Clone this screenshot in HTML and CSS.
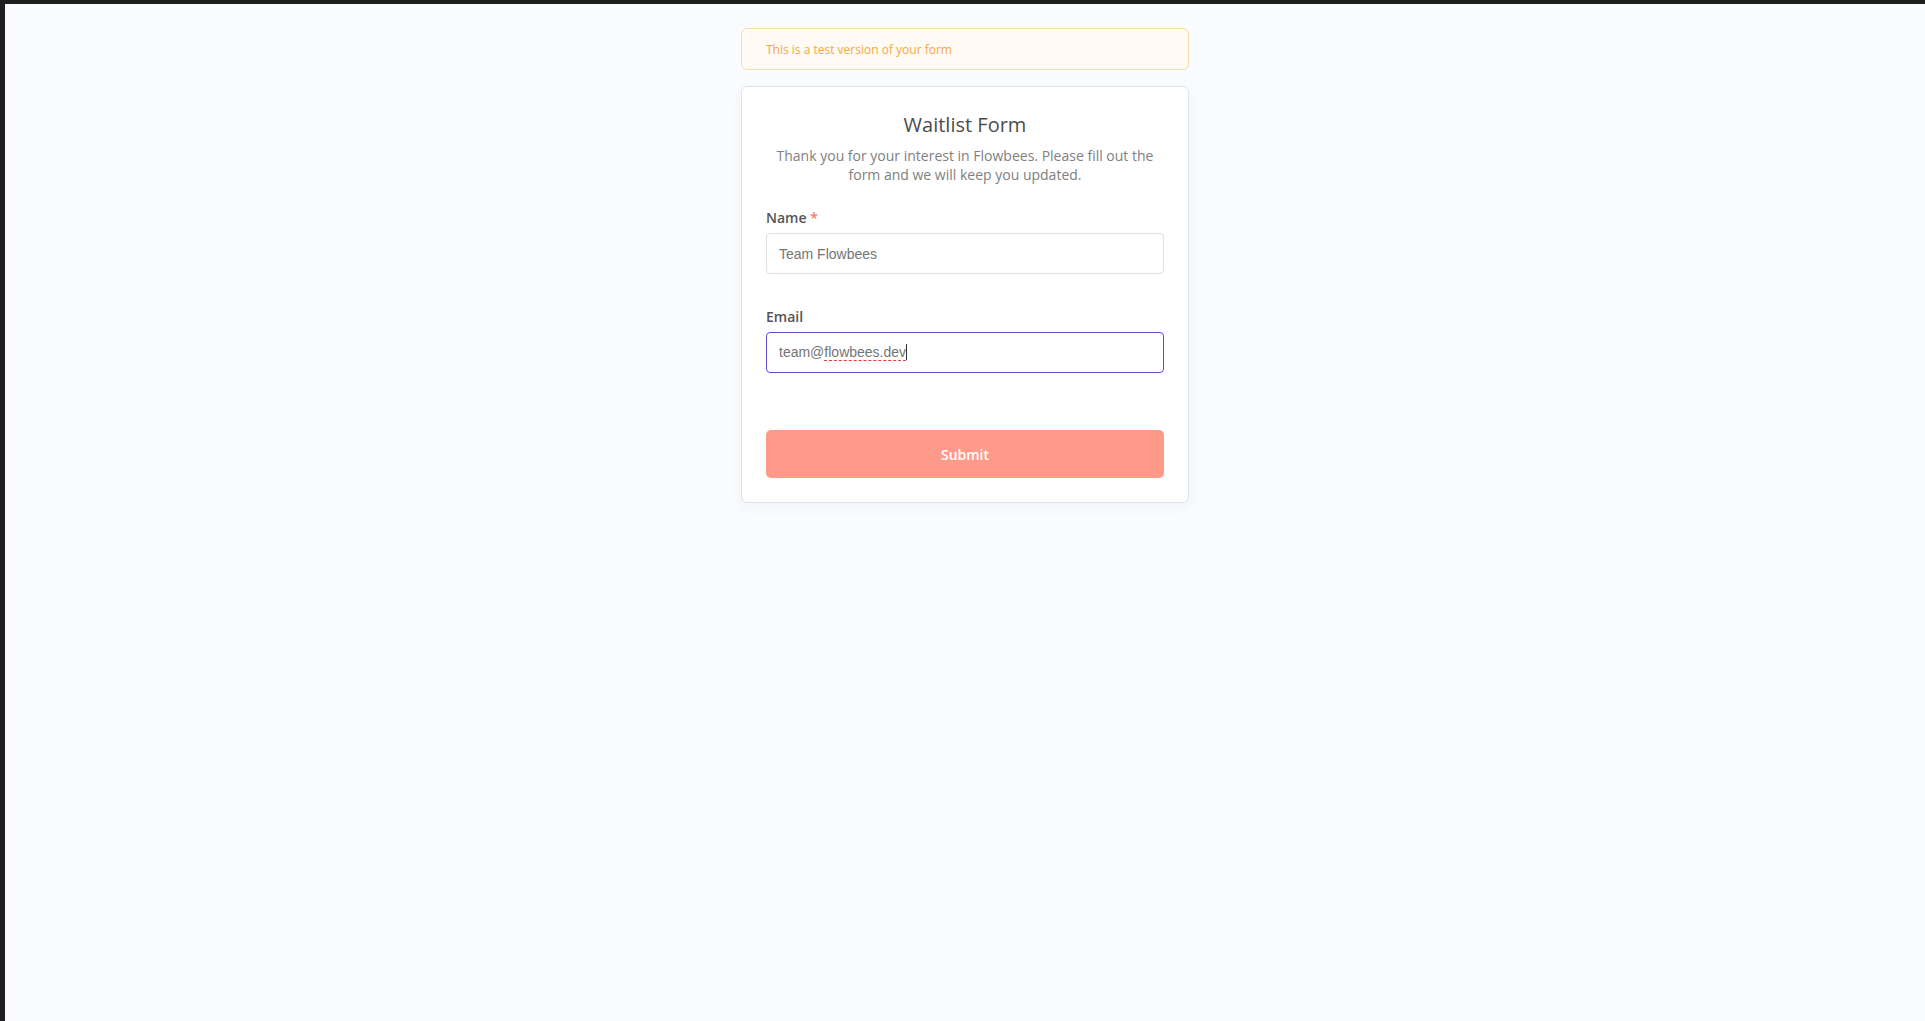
FILE: index.html
```html
<!DOCTYPE html>
<html lang="en">

<head>
    <meta charset="UTF-8" />
    <meta name="viewport" content="width=device-width, initial-scale=1.0" />
    <title>Waitlist Form</title>
    <link rel="stylesheet" href="styles.css">
</head>

<body>
    <div class="page">
        <div class="wrap">
            <div class="test-banner">This is a test version of your form</div>

            <form class="card" onsubmit="return false;">
                <h1>Waitlist Form</h1>
                <p class="intro">Thank you for your interest in Flowbees. Please fill out the form and we will keep you updated.</p>

                <div class="field">
                    <label>Name <span class="req">*</span></label>
                    <input type="text" class="input" value="Team Flowbees" />
                </div>

                <div class="field">
                    <label>Email</label>
                    <div class="input focused">team@<span class="misspelt">flowbees.dev</span><span class="caret"></span></div>
                </div>

                <button type="submit" class="submit">Submit</button>
            </form>
        </div>
    </div>
</body>

</html>
```

FILE: styles.css
```css
* {
    box-sizing: border-box;
}

body {
    margin: 0;
    font-family: 'Open Sans', 'Noto Sans', sans-serif;
    background-color: #1f1f1f;
}

.page {
    min-height: 100vh;
    background-color: #fafbfe;
    border-top: 4px solid #1f1f1f;
    border-left: 5px solid #1f1f1f;
    padding-top: 24px;
}

.wrap {
    width: 448px;
    margin: 0 auto;
    display: flex;
    flex-direction: column;
    gap: 16px;
}

.test-banner {
    height: 42px;
    display: flex;
    align-items: center;
    padding: 0 24px;
    font-size: 12px;
    color: #f2a848;
    background-color: #fffaf4;
    border: 1px solid #f8dcae;
    border-radius: 6px;
}

.card {
    background-color: white;
    border: 1px solid #dfe2ea;
    border-radius: 6px;
    box-shadow: 0 4px 14px rgba(30, 40, 90, 0.04);
    padding: 23px 24px 24px;
}

.card h1 {
    margin: 0;
    text-align: center;
    font-size: 20px;
    font-weight: 400;
    line-height: 30px;
    color: #4d4d4d;
}

.intro {
    margin: 7px 0 0;
    text-align: center;
    font-size: 14px;
    line-height: 18.5px;
    color: #808080;
}

.field {
    margin-top: 24px;
}

.field + .field {
    margin-top: 33px;
}

.field label {
    display: block;
    font-size: 14px;
    font-weight: 600;
    line-height: 20px;
    color: #555;
    margin-bottom: 5px;
}

.req {
    color: #f37a6c;
}

.input {
    display: block;
    width: 100%;
    height: 41px;
    padding: 0 12px;
    font-family: 'Liberation Sans', Arial, sans-serif;
    font-size: 14px;
    line-height: 39px;
    color: #757575;
    background: white;
    border: 1px solid #dcdfe6;
    border-radius: 4px;
    outline: none;
}

.input.focused {
    border-color: #5a4fc2;
}

.misspelt {
    text-decoration: underline dashed #ef3b3b;
    text-underline-offset: 3px;
    text-decoration-thickness: 1px;
}

.caret {
    display: inline-block;
    width: 1px;
    height: 16px;
    background-color: #333;
    vertical-align: -3px;
}

.submit {
    display: block;
    width: 100%;
    height: 48px;
    margin-top: 57px;
    font-family: inherit;
    font-size: 14px;
    font-weight: 600;
    color: white;
    background-color: #ff9a8b;
    border: none;
    border-radius: 5px;
    cursor: pointer;
}
```
